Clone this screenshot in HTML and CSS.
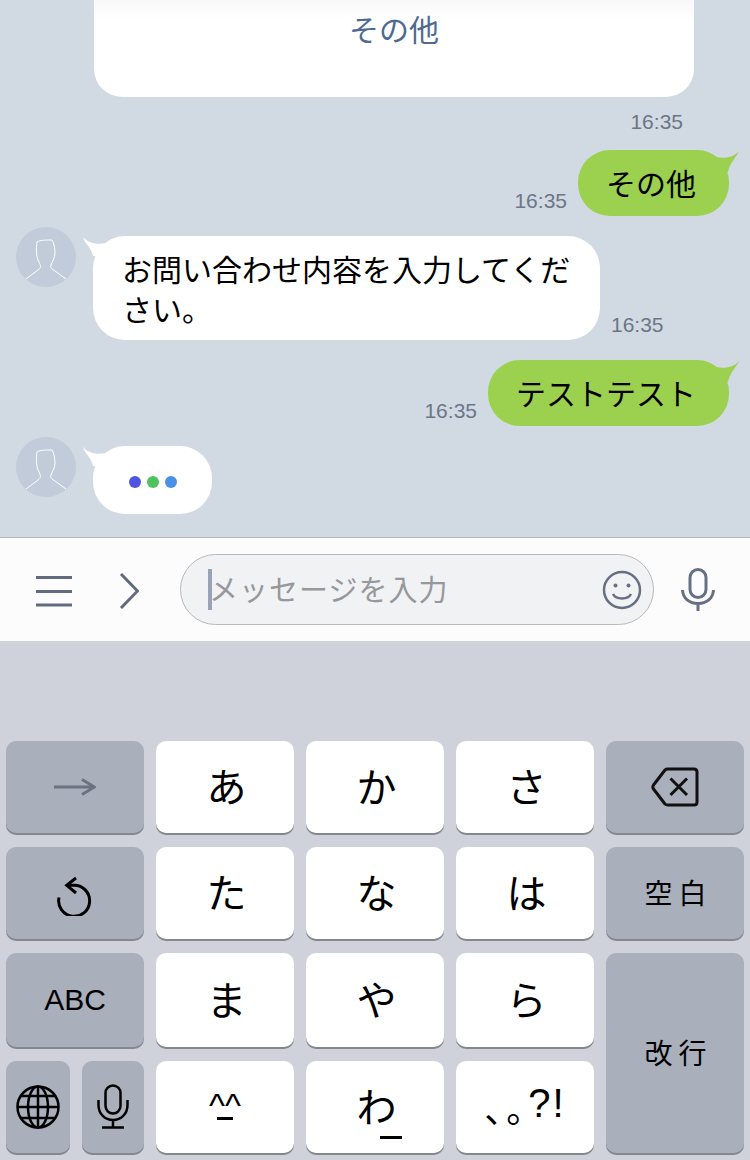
FILE: index.html
```html
<!DOCTYPE html>
<html lang="ja">
<head>
<meta charset="utf-8">
<title>チャット</title>
<link rel="stylesheet" href="styles.css">
</head>
<body>
<div class="screen">
  <section class="chat">
    <div class="card"><span class="card-link">その他</span></div>
    <div class="card-time"><span class="time">16:35</span></div>

    <div class="row row-out row-a">
      <span class="time">16:35</span>
      <div class="bubble out">その他
        <svg class="tail tail-out" viewBox="0 0 24 24"><path d="M0 7C10 9 18 7 23 1C20 8 14 12 12 22L0 22Z"/></svg>
      </div>
    </div>

    <div class="row row-in row-b">
      <svg class="avatar" viewBox="0 0 60 60"><circle cx="30" cy="30" r="30"/><path d="M10 52L22 43C25 41 25 39 23 35C20 30 20 22 21 15C23 13 31 13 36 13C38 16 39 22 39 26C39 31 36 35 35 38C34 41 36 42 39 44L50 52"/></svg>
      <div class="bubble in wide">お問い合わせ内容を入力してください。
        <svg class="tail tail-in" viewBox="0 0 24 24"><path d="M24 7C14 9 6 7 1 1C3 8 9 11 11 20L24 22Z"/></svg>
      </div>
      <span class="time">16:35</span>
    </div>

    <div class="row row-out row-c">
      <span class="time">16:35</span>
      <div class="bubble out">テストテスト
        <svg class="tail tail-out" viewBox="0 0 24 24"><path d="M0 7C10 9 18 7 23 1C20 8 14 12 12 22L0 22Z"/></svg>
      </div>
    </div>

    <div class="row row-in row-d">
      <svg class="avatar" viewBox="0 0 60 60"><circle cx="30" cy="30" r="30"/><path d="M10 52L22 43C25 41 25 39 23 35C20 30 20 22 21 15C23 13 31 13 36 13C38 16 39 22 39 26C39 31 36 35 35 38C34 41 36 42 39 44L50 52"/></svg>
      <div class="bubble in typing">
        <i class="dot dot-a"></i><i class="dot dot-b"></i><i class="dot dot-c"></i>
        <svg class="tail tail-in" viewBox="0 0 24 24"><path d="M24 7C14 9 6 7 1 1C3 8 9 11 11 20L24 22Z"/></svg>
      </div>
    </div>
  </section>

  <section class="inputbar">
    <svg class="ico-menu" viewBox="0 0 36 36"><path d="M0 4.500H36M0 18.500H36M0 32H36"/></svg>
    <svg class="ico-chev" viewBox="0 0 20 36"><path d="M2 1L18.500 18L2 35"/></svg>
    <div class="field">
      <i class="caret"></i>
      <span class="placeholder">メッセージを入力</span>
      <svg class="ico-smile" viewBox="0 0 40 40"><circle cx="20" cy="20" r="18"/><circle class="eye" cx="13.500" cy="15.500" r="2"/><circle class="eye" cx="26.500" cy="15.500" r="2"/><path d="M11 24C14 30 26 30 29 24"/></svg>
    </div>
    <svg class="ico-mic" viewBox="0 0 34 44"><rect x="9" y="1.500" width="16" height="28" rx="8"/><path d="M1.500 22C2 31 9 35.500 17 35.500C25 35.500 32 31 32.500 22M17 35.500V43"/></svg>
  </section>

  <section class="keyboard">
    <div class="keys">
      <div class="key dark"><svg class="ico-arrow" viewBox="0 0 42 18"><path d="M0 9H40M28 1.500L40.500 9L28 16.500"/></svg></div>
      <div class="key">あ</div>
      <div class="key">か</div>
      <div class="key">さ</div>
      <div class="key dark"><svg class="ico-del" viewBox="0 0 48 40"><path d="M17 2H43C45 2 46 3 46 5V35C46 37 45 38 43 38H17C16 38 15 38 14 37L2.500 22C1.500 20.500 1.500 19.500 2.500 18L14 3C15 2 16 2 17 2ZM19.500 11.500L36 28M36 11.500L19.500 28"/></svg></div>

      <div class="key dark"><svg class="ico-undo" viewBox="0 0 40 40"><path d="M21 2L11.700 9.300L21 17M12 9.300H19A15.500 15.500 0 1 1 4 21.500"/></svg></div>
      <div class="key">た</div>
      <div class="key">な</div>
      <div class="key">は</div>
      <div class="key dark label-jp">空白</div>

      <div class="key dark label-en">ABC</div>
      <div class="key">ま</div>
      <div class="key">や</div>
      <div class="key">ら</div>
      <div class="key dark label-jp tall">改行</div>

      <div class="pair">
        <div class="key dark"><svg class="ico-globe" viewBox="0 0 44 44"><circle cx="22" cy="22" r="20.500"/><ellipse cx="22" cy="22" rx="10" ry="20.500"/><path d="M22 1.500V42.500M1.500 22H42.500M5 11H39M5 33H39"/></svg></div>
        <div class="key dark"><svg class="ico-kbmic" viewBox="0 0 32 46"><rect x="8.500" y="1.500" width="15" height="28" rx="7.500"/><path d="M1.500 16V21C1.500 30 8 36 16 36C24 36 30.500 30 30.500 21V16M16 36V43.500M5 43.500H27"/></svg></div>
      </div>
      <div class="key"><span class="stack smile-mark">^^</span></div>
      <div class="key"><span class="stack wa-mark">わ</span></div>
      <div class="key punct"><span class="punct-jp">、。</span><span class="punct-en">?!</span></div>
    </div>
  </section>
</div>
</body>
</html>
```

FILE: styles.css
```css
* { box-sizing: border-box; }

html, body { margin: 0; padding: 0; }

body {
  width: 750px;
  height: 1160px;
  overflow: hidden;
  font-family: "Noto Sans CJK JP", "Liberation Sans", sans-serif;
  color: #000;
}

.screen {
  display: flex;
  flex-direction: column;
  width: 750px;
  height: 1160px;
}

/* chat */
.chat {
  height: 537px;
  flex: none;
  background: #d1d9e3;
}

.card {
  width: 600px;
  height: 97px;
  margin-left: 94px;
  padding-top: 6px;
  text-align: center;
  background: linear-gradient(#f8f8f8, #fff 20px);
  border-radius: 0 0 28px 28px;
}

.card-link {
  font-size: 30px;
  line-height: 44px;
  color: #4f6a92;
}

.card-time {
  display: flex;
  justify-content: flex-end;
  margin-top: 13px;
  padding-right: 67px;
  height: 24px;
}

.time {
  font-family: "Liberation Sans", sans-serif;
  font-size: 21px;
  line-height: 24px;
  color: #6c7686;
}

.row { display: flex; align-items: flex-end; }
.row-out { justify-content: flex-end; padding-right: 21px; }
.row-out .time { margin-right: 11px; margin-bottom: 3px; }
.row-in { padding-left: 16px; position: relative; }
.row-in .time { margin-left: 11px; margin-bottom: 3px; }

.row-a { margin-top: 16px; }
.row-b { margin-top: 11px; }
.row-c { margin-top: 20px; }
.row-d { margin-top: 11px; }

.avatar {
  position: absolute;
  left: 16px;
  top: 0;
  width: 60px;
  height: 60px;
}
.avatar circle { fill: #c2cbd9; }
.avatar path { fill: none; stroke: #fff; stroke-width: 1; }

.bubble {
  position: relative;
  padding: 12px 30px 14px;
  font-size: 30px;
  line-height: 40px;
  border-radius: 32px;
}
.out { background: #9bd14f; padding-left: 28px; padding-right: 33px; }
.in { background: #fff; margin-left: 77px; margin-top: 9px; }
.wide { width: 507px; padding: 12px 14px 12px 29px; }

.typing {
  display: flex;
  align-items: center;
  gap: 6px;
  width: 119px;
  height: 68px;
  padding: 4px 0 0 36px;
}

.dot { width: 12px; height: 12px; border-radius: 50%; }
.dot-a { background: #4f55e0; }
.dot-b { background: #4cc35f; }
.dot-c { background: #4a90e8; }

.tail { position: absolute; top: 0; width: 24px; height: 24px; }
.tail-out { right: -11px; }
.tail-out path { fill: #9bd14f; }
.tail-in { left: -11px; }
.tail-in path { fill: #fff; }

/* input bar */
.inputbar {
  display: flex;
  align-items: center;
  height: 104px;
  flex: none;
  padding: 0 0 0 36px;
  background: #fcfcfd;
  border-top: 1px solid #b4b4bc;
}

.inputbar svg { flex: none; fill: none; }

.ico-menu { width: 36px; height: 36px; margin-top: 2px; }
.ico-menu path { stroke: #626b7e; stroke-width: 3; }

.ico-chev { width: 20px; height: 36px; margin-left: 47px; margin-top: 2px; }
.ico-chev path { stroke: #626b7e; stroke-width: 3; }

.field {
  position: relative;
  display: flex;
  align-items: center;
  width: 474px;
  height: 71px;
  margin-left: 41px;
  padding-left: 27px;
  background: #f1f2f4;
  border: 1.500px solid #b8b9bd;
  border-radius: 36px;
}

.caret {
  width: 4px;
  height: 41px;
  background: #9aa3b5;
  flex: none;
}

.placeholder {
  font-size: 29px;
  letter-spacing: 1px;
  color: #97979c;
  margin: -4px 0 0 -3px;
}

.ico-smile { position: absolute; right: 11px; top: 15px; width: 40px; height: 40px; }
.ico-smile circle, .ico-smile path { stroke: #667085; stroke-width: 2.500; }
.ico-smile .eye { fill: #667085; stroke: none; }

.ico-mic { width: 34px; height: 44px; margin-left: 27px; }
.ico-mic rect, .ico-mic path { stroke: #667085; stroke-width: 3; }

/* keyboard */
.keyboard {
  flex: 1;
  padding: 100px 6px 0;
  background: #cfd2da;
}

.keys {
  display: grid;
  grid-template-columns: repeat(5, 138px);
  grid-template-rows: 92px 92px 94px 92px;
  gap: 14px 12px;
}

.key {
  display: flex;
  align-items: center;
  justify-content: center;
  padding: 0 0 5px 3px;
  font-size: 40px;
  line-height: 1;
  background: #fff;
  border-radius: 10px;
  box-shadow: 0 2px 0 #85878f;
}

.dark { background: #a9afbb; padding: 0; }

.label-jp { font-size: 28px; letter-spacing: 6px; padding: 0 0 3px 7px; }
.label-en { font-family: "Liberation Sans", sans-serif; font-size: 30px; }
.tall { grid-column: 5; grid-row: 3 / span 2; }

.pair { display: flex; gap: 12px; }
.pair .key:first-child { width: 64px; flex: none; }
.pair .key:last-child { width: 62px; flex: none; }

.key svg { fill: none; flex: none; }

.ico-arrow { width: 42px; height: 18px; }
.ico-arrow path { stroke: #6d7280; stroke-width: 3; }

.ico-del { width: 48px; height: 40px; margin-top: -1px; }
.ico-del path { stroke: #111; stroke-width: 3; stroke-linejoin: round; }

.ico-undo { width: 40px; height: 40px; margin-top: 5px; }
.ico-undo path { stroke: #000; stroke-width: 3; }

.ico-globe { width: 44px; height: 44px; }
.ico-globe circle, .ico-globe ellipse, .ico-globe path { stroke: #000; stroke-width: 2.500; }

.ico-kbmic { width: 32px; height: 46px; }
.ico-kbmic rect, .ico-kbmic path { stroke: #000; stroke-width: 2.500; }

.stack { position: relative; display: block; }

.smile-mark {
  font-family: "Liberation Sans", sans-serif;
  font-size: 34px;
  margin: 1px 3px 0 0;
}
.smile-mark::after {
  content: "";
  position: absolute;
  left: 8px;
  right: 8px;
  top: 29px;
  height: 3px;
  background: #000;
}

.wa-mark::after {
  content: "";
  position: absolute;
  left: 23px;
  top: 51px;
  width: 22px;
  height: 3px;
  background: #000;
}

.punct { padding: 0; }
.punct-jp { font-size: 36px; letter-spacing: -14px; text-spacing-trim: space-all; font-feature-settings: "chws" 0, "palt" 0; }
.punct-en { font-family: "Liberation Sans", sans-serif; font-size: 40px; letter-spacing: 2px; margin-top: -8px; }
```
